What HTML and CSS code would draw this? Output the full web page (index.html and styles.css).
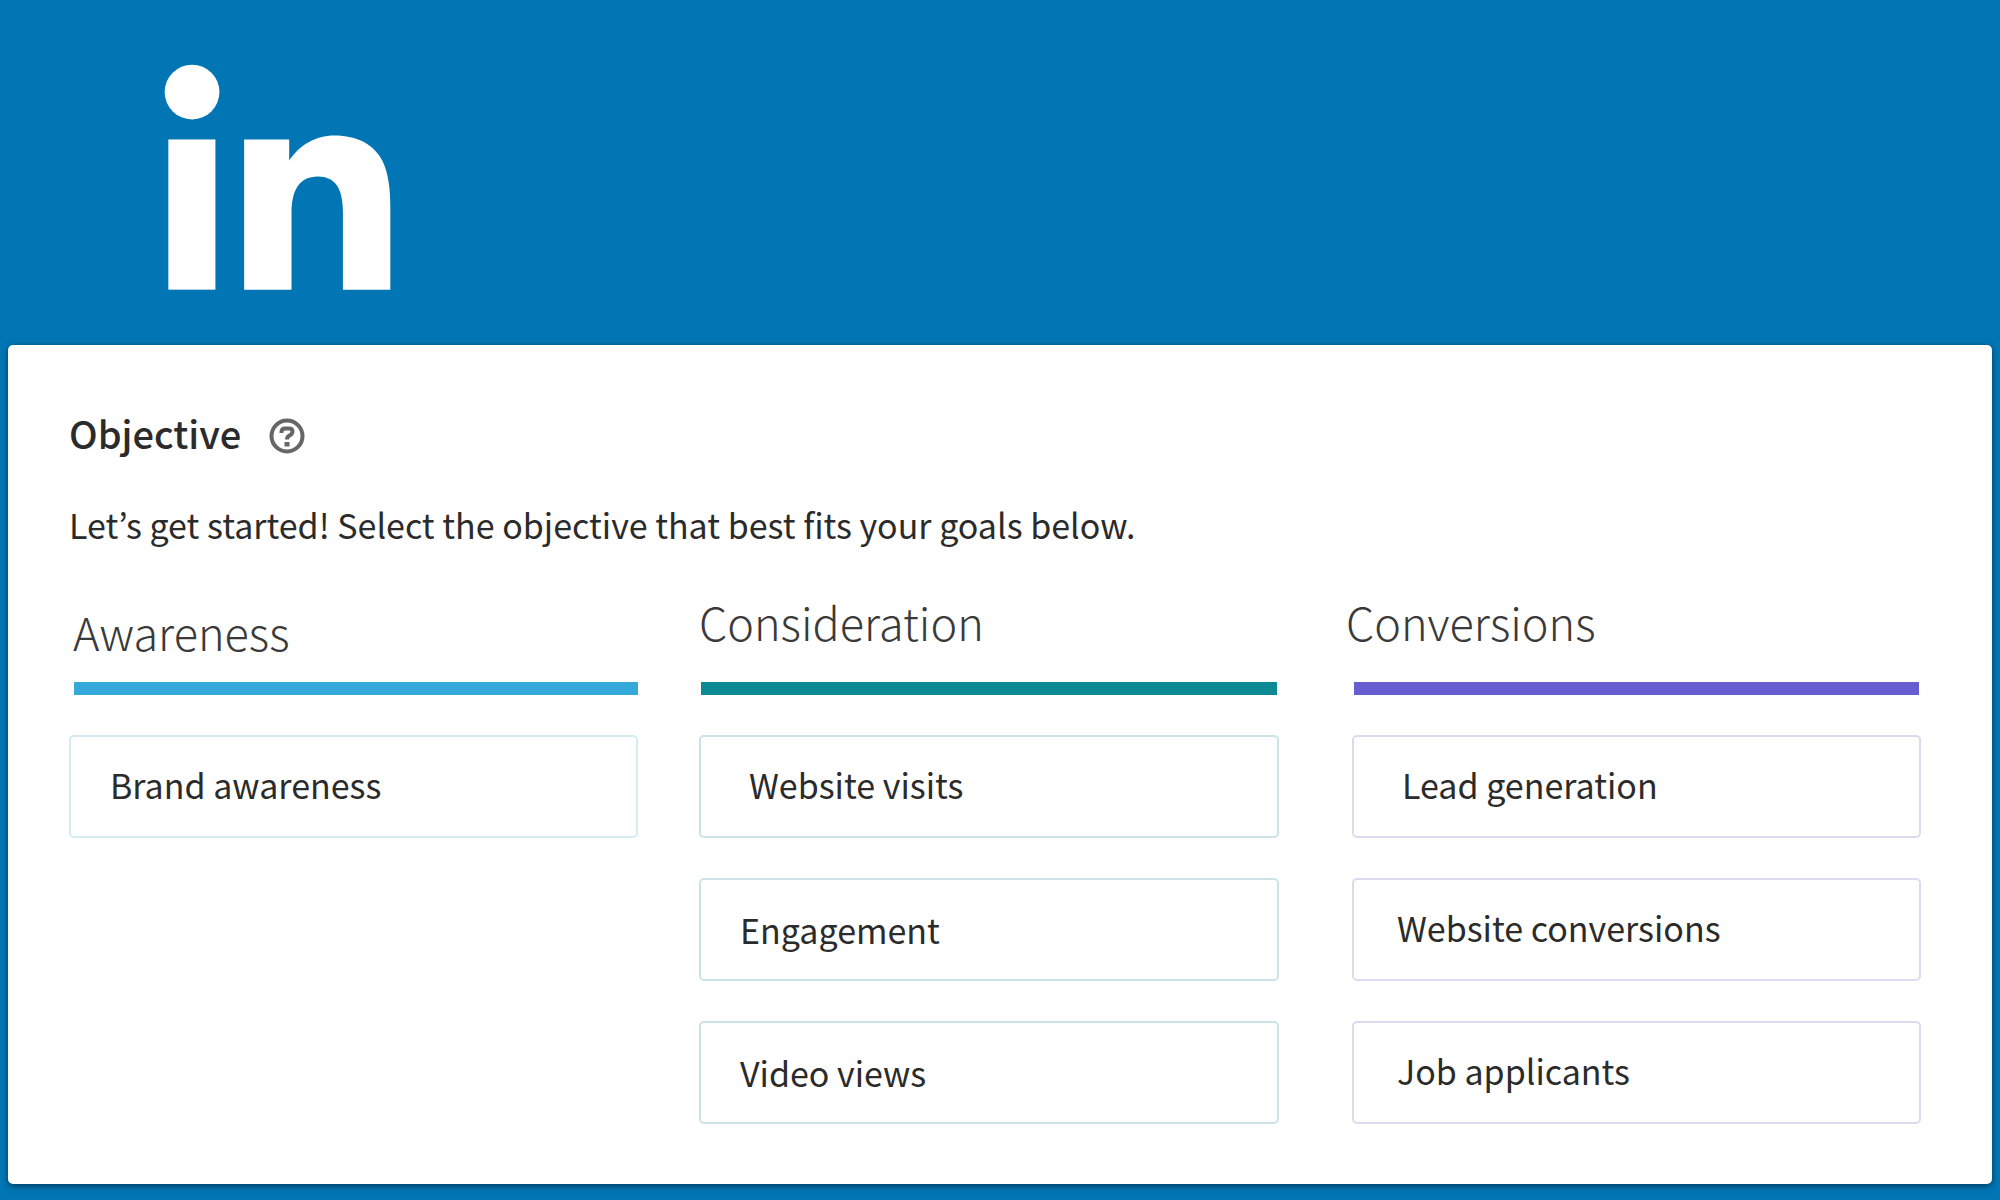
FILE: index.html
```
<!DOCTYPE html>
<html lang="en">
  <head>
    <meta charset="UTF-8" />
    <meta name="viewport" content="width=device-width, initial-scale=1.0" />
    <title>LinkedIn - Objective</title>
    <link rel="stylesheet" href="styles.css">
  </head>
  <body>
    <header class="header">
      <svg class="logo" viewBox="72 71 680 677" role="img" aria-label="LinkedIn">
        <circle cx="156" cy="155" r="82" />
        <rect x="85" y="297" width="141" height="450" />
        <path d="M312 297H447V360C477 315 525 285 583 285C650 285 702 312 727 362C744 398 750 445 750 500V747H608V515C608 448 588 408 533 408C476 408 454 450 454 520V747H312Z" />
      </svg>
    </header>
    <main class="card">
      <div class="title-row">
        <h1 class="title">Objective</h1>
        <button class="help" type="button" aria-label="Help">
          <svg class="help-icon" viewBox="0 0 36 36">
            <circle cx="18" cy="18" r="15.5" />
            <path d="M12.5 15V14Q12.5 10.5 16 10.5H20Q23.5 10.5 23.5 13.5Q23.5 16 20.5 17.5Q18 18.7 18 21.5" />
            <rect x="15.5" y="24" width="5" height="4.5" />
          </svg>
        </button>
      </div>
      <p class="intro">Let’s get started! Select the objective that best fits your goals below.</p>
      <div class="columns">
        <section class="column awareness">
          <h2 class="column-title">Awareness</h2>
          <div class="bar"></div>
          <button class="option" type="button">Brand awareness</button>
        </section>
        <section class="column consideration">
          <h2 class="column-title">Consideration</h2>
          <div class="bar"></div>
          <button class="option option-first" type="button">Website visits</button>
          <button class="option" type="button">Engagement</button>
          <button class="option" type="button">Video views</button>
        </section>
        <section class="column conversions">
          <h2 class="column-title">Conversions</h2>
          <div class="bar"></div>
          <button class="option option-first" type="button">Lead generation</button>
          <button class="option" type="button">Website conversions</button>
          <button class="option" type="button">Job applicants</button>
        </section>
      </div>
    </main>
  </body>
</html>
```
FILE: styles.css
```
* {
  box-sizing: border-box;
}

body {
  margin: 0;
  padding: 0 8px 15px;
  background-color: #0275b4;
  color: #2b2b2b;
  font-family: "Noto Sans CJK KR", "Noto Sans", sans-serif;
}

.header {
  padding: 64px 156px 55px;
}

.logo {
  display: block;
  width: 227px;
  height: 226px;
  fill: #fff;
}

.card {
  padding: 60px 71px 60px 61px;
  background-color: #fff;
  border-radius: 5px;
  box-shadow: 0 2px 6px rgba(0, 0, 0, 0.5);
}

.title-row {
  display: flex;
  align-items: center;
  gap: 28px;
}

.title {
  margin: 0;
  font-size: 38px;
  line-height: 56px;
  font-weight: 500;
}

.help {
  padding: 6px 0 0;
  border: none;
  background: none;
  cursor: pointer;
}

.help-icon {
  display: block;
  width: 36px;
  height: 36px;
  fill: none;
  stroke: #666;
  stroke-width: 4;
}

.help-icon rect {
  fill: #666;
  stroke: none;
}

.intro {
  margin: 34px 0 0;
  font-size: 34px;
  line-height: 60px;
}

.columns {
  display: grid;
  grid-template-columns: 569fr 580fr 581fr;
  column-gap: 61px;
  margin-top: 42px;
}

.column-title {
  margin: 0;
  height: 85px;
  color: #3a3a3a;
  font-size: 45px;
  line-height: 50px;
  font-weight: 200;
}

.bar {
  height: 13px;
  margin: 0 2px 40px;
}

.option {
  display: block;
  width: 100%;
  height: 103px;
  margin-bottom: 40px;
  padding: 0 40px 4px 39px;
  border: 2px solid;
  border-radius: 5px;
  background-color: #fff;
  color: inherit;
  font: inherit;
  font-size: 34px;
  text-align: left;
  cursor: pointer;
}

.option:last-child {
  margin-bottom: 0;
}

.awareness .column-title {
  padding: 10px 4px 0;
}

.awareness .bar {
  margin: 0 0 40px 5px;
  background-color: #34a9da;
}

.awareness .option {
  border-color: #d5ebf2;
}

.consideration .bar {
  background-color: #0c8a94;
}

.consideration .option {
  border-color: #cbe3e6;
}

.consideration .option + .option {
  padding-bottom: 0;
}

.conversions {
  display: flex;
  flex-direction: column;
}

.conversions .column-title {
  padding-left: 6px;
}

.conversions .bar {
  margin-left: 14px;
  background-color: #665ed0;
}

.conversions .option {
  width: auto;
  margin-left: 12px;
  padding-left: 43px;
  border-color: #dcdaee;
}

.column .option-first {
  padding-left: 48px;
}
```
